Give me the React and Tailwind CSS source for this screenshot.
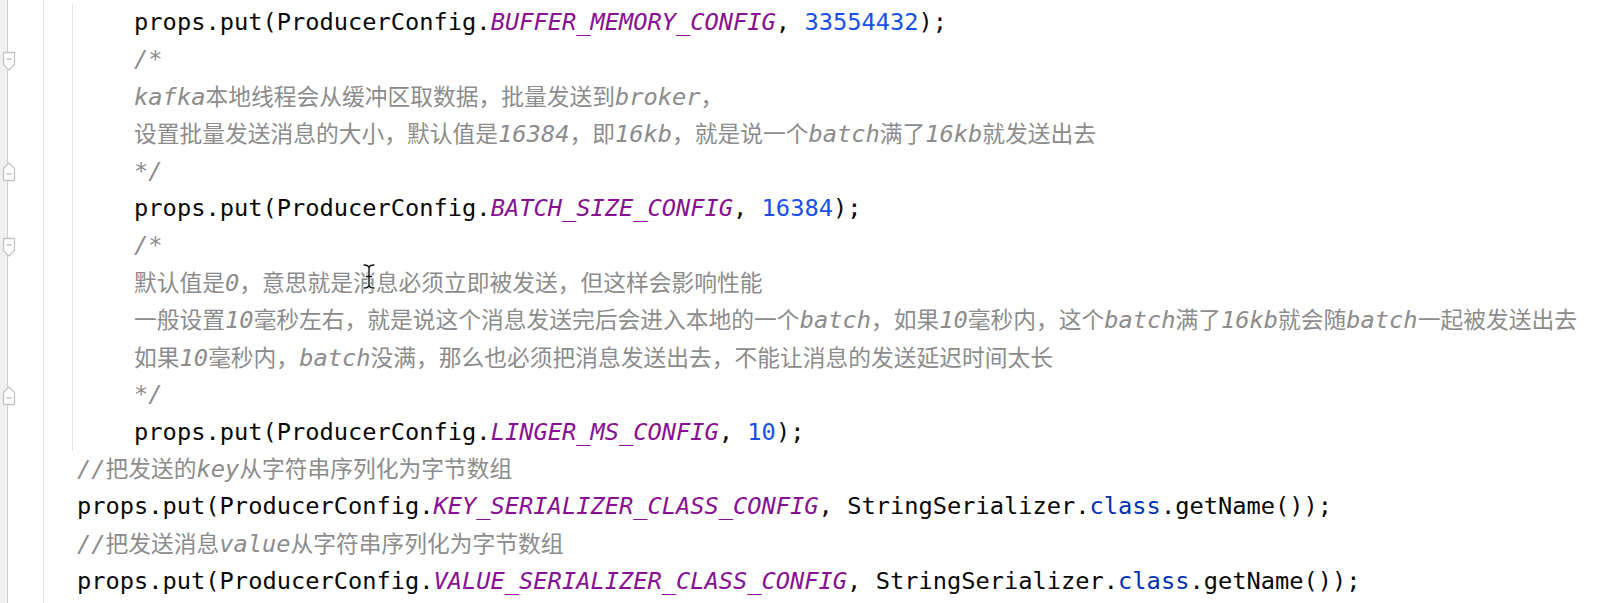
import React from "react";

const CJK_RE = /([\u3000-\u303f\u3400-\u9fff\uff00-\uffef]+)/;

function Comment({ text }) {
  const parts = text.split(CJK_RE);
  return (
    <span className="text-[#8c8c8c]">
      {parts.map((p, i) =>
        i % 2 === 1 ? (
          <span
            key={i}
            className="not-italic text-[22.75px] font-['Noto_Sans_CJK_SC','Noto_Sans_CJK_JP',sans-serif]"
          >
            {p}
          </span>
        ) : (
          <span key={i} className="italic">
            {p}
          </span>
        )
      )}
    </span>
  );
}

function Put({ name, value }) {
  return (
    <span className="text-[#080808]">
      props.put(ProducerConfig.
      <span className="italic text-[#871094]">{name}</span>,{" "}
      {value.kind === "num" ? (
        <span className="text-[#1750eb]">{value.v}</span>
      ) : (
        <>
          StringSerializer.<span className="text-[#0033b3]">class</span>.getName()
        </>
      )}
      );
    </span>
  );
}

function Row({ children }) {
  return (
    <div className="h-[37.26px] flex items-center whitespace-pre leading-none">
      {children}
    </div>
  );
}

function FoldStart() {
  return (
    <svg width="14" height="21" viewBox="0 0 14 21" className="ml-[2px] mt-[3px]">
      <path d="M1.5 1.5 H12.5 V13.5 L7 19 L1.5 13.5 Z" fill="#fff" stroke="#c4c4c4" strokeWidth="1.3" strokeLinejoin="round" />
      <path d="M4.5 8 H9.5" stroke="#b8b8b8" strokeWidth="1.4" />
    </svg>
  );
}

function FoldEnd() {
  return (
    <svg width="14" height="21" viewBox="0 0 14 21" className="ml-[2px]">
      <path d="M1.5 19.5 H12.5 V7.5 L7 2 L1.5 7.5 Z" fill="#fff" stroke="#c4c4c4" strokeWidth="1.3" strokeLinejoin="round" />
      <path d="M4.5 13 H9.5" stroke="#b8b8b8" strokeWidth="1.4" />
    </svg>
  );
}

const folds = { 1: "start", 4: "end", 6: "start", 10: "end" };

export default function App() {
  const inner = [
    <Put name="BUFFER_MEMORY_CONFIG" value={{ kind: "num", v: "33554432" }} />,
    <Comment text="/*" />,
    <Comment text="kafka本地线程会从缓冲区取数据，批量发送到broker，" />,
    <Comment text="设置批量发送消息的大小，默认值是16384，即16kb，就是说一个batch满了16kb就发送出去" />,
    <Comment text="*/" />,
    <Put name="BATCH_SIZE_CONFIG" value={{ kind: "num", v: "16384" }} />,
    <Comment text="/*" />,
    <Comment text="默认值是0，意思就是消息必须立即被发送，但这样会影响性能" />,
    <Comment text="一般设置10毫秒左右，就是说这个消息发送完后会进入本地的一个batch，如果10毫秒内，这个batch满了16kb就会随batch一起被发送出去" />,
    <Comment text="如果10毫秒内，batch没满，那么也必须把消息发送出去，不能让消息的发送延迟时间太长" />,
    <Comment text="*/" />,
    <Put name="LINGER_MS_CONFIG" value={{ kind: "num", v: "10" }} />,
  ];
  const outer = [
    <Comment text="//把发送的key从字符串序列化为字节数组" />,
    <Put name="KEY_SERIALIZER_CLASS_CONFIG" value={{ kind: "ser" }} />,
    <Comment text="//把发送消息value从字符串序列化为字节数组" />,
    <Put name="VALUE_SERIALIZER_CLASS_CONFIG" value={{ kind: "ser" }} />,
  ];

  return (
    <div className="relative w-[1608px] h-[603px] bg-white overflow-hidden flex font-['DejaVu_Sans_Mono','Liberation_Mono',monospace] text-[23.7px]">
      {/* gutter */}
      <div className="relative w-[18px] shrink-0">
        <div className="absolute inset-y-0 left-0 w-[8px] bg-[#f0f0f0] border-r border-[#d2d2d2]" />
        <div className="relative flex flex-col pt-[4px]">
          {Array.from({ length: 16 }).map((_, i) => (
            <div key={i} className="h-[37.26px] flex items-center">
              {folds[i] === "start" && <FoldStart />}
              {folds[i] === "end" && <FoldEnd />}
            </div>
          ))}
        </div>
      </div>
      <div className="w-[25px] shrink-0" />
      <div className="w-px shrink-0 bg-[#e6e6e6]" />
      <div className="w-[28px] shrink-0" />
      {/* code */}
      <div className="flex-1 flex flex-col pt-[4px]">
        <div className="border-l border-[#e6e6e6] pl-[4px]">
          {inner.map((c, i) => (
            <Row key={i}>
              <span className="pl-[57.1px]">{c}</span>
            </Row>
          ))}
        </div>
        <div className="pl-[5px]">
          {outer.map((c, i) => (
            <Row key={i}>{c}</Row>
          ))}
        </div>
      </div>
      {/* mouse I-beam cursor */}
      <svg
        className="absolute left-[362px] top-[263px]"
        width="14"
        height="27"
        viewBox="0 0 14 27"
      >
        <path
          d="M2 2 C5 2 6.5 3 7 4.5 C7.5 3 9 2 12 2 M7 4.5 V22.5 M2 25 C5 25 6.5 24 7 22.5 C7.5 24 9 25 12 25 M4.5 13.5 H9.5"
          fill="none"
          stroke="#fff"
          strokeWidth="3.2"
          strokeLinecap="round"
        />
        <path
          d="M2 2 C5 2 6.5 3 7 4.5 C7.5 3 9 2 12 2 M7 4.5 V22.5 M2 25 C5 25 6.5 24 7 22.5 C7.5 24 9 25 12 25 M4.5 13.5 H9.5"
          fill="none"
          stroke="#111"
          strokeWidth="1.4"
          strokeLinecap="round"
        />
      </svg>
    </div>
  );
}
